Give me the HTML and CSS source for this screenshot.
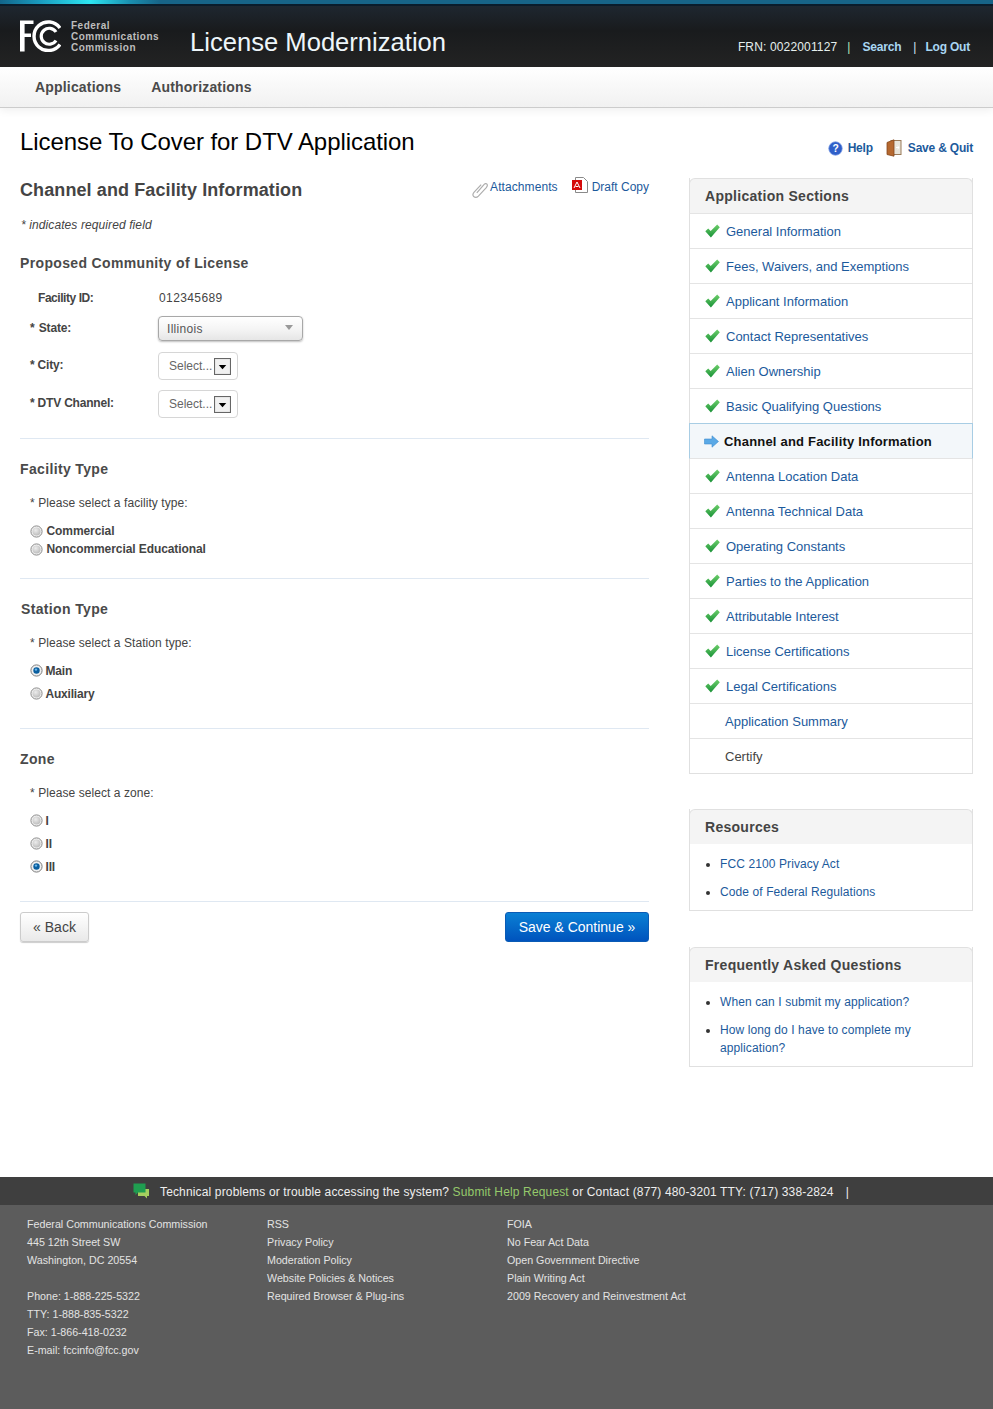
FILE: index.html
```html
<!DOCTYPE html>
<html lang="en">
<head>
<meta charset="utf-8">
<title>License Modernization</title>
<link rel="stylesheet" href="styles.css">
</head>
<body>
<svg class="defs" width="0" height="0" aria-hidden="true">
  <defs>
    <linearGradient id="chk" x1="0" y1="0" x2="0" y2="1"><stop offset="0" stop-color="#6fd06c"/><stop offset="1" stop-color="#169035"/></linearGradient>
    <radialGradient id="rdg" cx=".4" cy=".35" r=".8"><stop offset="0" stop-color="#ececec"/><stop offset="1" stop-color="#b4b4b4"/></radialGradient>
    <symbol id="check" viewBox="0 0 15 14"><path d="M0.3 7.3 L3.2 4.6 L5.7 7 L12.2 0.4 L14.8 3.2 L5.9 13.6 Z" fill="url(#chk)"/></symbol>
    <symbol id="radio" viewBox="0 0 13 13"><circle cx="6.5" cy="6.5" r="5.6" fill="#f2f2f2" stroke="#8a8a8a"/><circle cx="6.5" cy="6.5" r="4" fill="url(#rdg)"/></symbol>
    <symbol id="radio-on" viewBox="0 0 13 13"><circle cx="6.5" cy="6.5" r="5.6" fill="#f0f0f0" stroke="#7d7d7d"/><circle cx="6.5" cy="6.5" r="3.2" fill="#0a5f9f"/><circle cx="6" cy="5.6" r="1.2" fill="#6bb6ea"/></symbol>
    <symbol id="mini" viewBox="0 0 16 16"><rect x=".5" y=".5" width="15" height="15" fill="#f1f1f1" stroke="#666"/><path d="M4.5 6.5h7L8 10.5z" fill="#000"/></symbol>
  </defs>
</svg>

<div class="topband"></div>
<header class="masthead">
  <div class="brand">
    <svg class="logo" viewBox="0 0 41 32" aria-hidden="true">
      <path d="M0 0.5H13.5V4H4.6V13.5H11V17H4.6V31.5H0Z" fill="#fff"/>
      <path d="M40 8A14.3 14.3 0 1 0 40 24.5" fill="none" stroke="#fff" stroke-width="3.4"/>
      <path d="M36 12A8 8 0 1 0 36 20.5" fill="none" stroke="#fff" stroke-width="3.2"/>
    </svg>
    <div class="agency">Federal<br>Communications<br>Commission</div>
  </div>
  <div class="apptitle">License Modernization</div>
  <div class="userlinks">
    <span class="frn">FRN: 0022001127</span><span class="pipe green">|</span>
    <a class="ulink" href="#">Search</a><span class="pipe second">|</span>
    <a class="ulink" href="#">Log Out</a>
  </div>
</header>
<nav class="mainnav"><a href="#">Applications</a><a href="#">Authorizations</a></nav>

<div class="titlerow">
  <h1>License To Cover for DTV Application</h1>
  <div class="pagetools">
    <a href="#"><svg class="ic" viewBox="0 0 16 16" aria-hidden="true"><circle cx="8" cy="8" r="7.2" fill="#2f5fc9" stroke="#7f9fe6" stroke-width=".8"/><text x="8" y="12" text-anchor="middle" class="qm">?</text></svg>Help</a>
    <a href="#"><svg class="ic door" viewBox="0 0 16 18" aria-hidden="true"><rect x="5" y="1.5" width="10" height="14" fill="#e8e4da" stroke="#9a7a58"/><path d="M1 3.5L8 .8V17.2L1 15.5Z" fill="#b5682f" stroke="#85471c" stroke-width=".8"/><path d="M10 8.5h3M11.5 7l1.7 1.5-1.7 1.5" stroke="#fff" fill="none"/></svg>Save &amp; Quit</a>
  </div>
</div>

<div class="layout">
  <main class="content">
    <div class="sectionhead">
      <h2>Channel and Facility Information</h2>
      <div class="doclinks">
        <a href="#"><svg class="clip" viewBox="0 0 15 15" aria-hidden="true"><path d="M4.5 10.2L11 2.6C12 1.4 13.4 1.3 14 2C14.7 2.8 14.4 4 13.4 5.2L6 13.2C4.6 14.6 2.8 14.6 1.6 13.6C.6 12.6 .8 11 1.8 9.8L8.6 2.4" fill="none" stroke="#adadad" stroke-width="1.1"/></svg>Attachments</a>
        <a href="#"><svg class="pdf" viewBox="0 0 16 17" aria-hidden="true"><path d="M3.5 .5H11.5L15.5 4.5V15.5H3.5Z" fill="#fff" stroke="#8a8a8a"/><rect x="0" y="3" width="10" height="10" fill="#d40a0a"/><path d="M2 11L5 5L8 11M3.5 9.5H6.5" stroke="#fff" fill="none"/></svg>Draft Copy</a>
      </div>
    </div>
    <p class="required">* indicates required field</p>

    <section class="block first">
      <h3>Proposed Community of License</h3>
      <div class="field idfield"><span class="flabel indent">Facility ID:</span><span class="fvalue">012345689</span></div>
      <div class="field statefield"><span class="flabel">* State:</span><div class="dropdown"><span>Illinois</span><i class="caret"></i></div></div>
      <div class="field cityfield"><span class="flabel">* City:</span><div class="minisel"><span>Select...</span><svg class="mini"><use href="#mini"/></svg></div></div>
      <div class="field dtvfield"><span class="flabel">* DTV Channel:</span><div class="minisel"><span>Select...</span><svg class="mini"><use href="#mini"/></svg></div></div>
    </section>

    <section class="block facility">
      <h3>Facility Type</h3>
      <p class="prompt">* Please select a facility type:</p>
      <label class="opt tight first-opt"><svg class="rd"><use href="#radio"/></svg>Commercial</label>
      <label class="opt tight"><svg class="rd"><use href="#radio"/></svg>Noncommercial Educational</label>
    </section>

    <section class="block station">
      <h3 class="nudge">Station Type</h3>
      <p class="prompt">* Please select a Station type:</p>
      <label class="opt close first-opt"><svg class="rd"><use href="#radio-on"/></svg>Main</label>
      <label class="opt close"><svg class="rd"><use href="#radio"/></svg>Auxiliary</label>
    </section>

    <section class="block zone">
      <h3>Zone</h3>
      <p class="prompt">* Please select a zone:</p>
      <label class="opt close first-opt"><svg class="rd"><use href="#radio"/></svg>I</label>
      <label class="opt close"><svg class="rd"><use href="#radio"/></svg>II</label>
      <label class="opt close"><svg class="rd"><use href="#radio-on"/></svg>III</label>
    </section>

    <div class="actions">
      <a class="btn back" href="#">« Back</a>
      <a class="btn primary" href="#">Save &amp; Continue »</a>
    </div>
  </main>

  <aside class="sidebar">
    <div class="panel">
      <h4>Application Sections</h4>
      <ul class="steps">
        <li><svg class="ck"><use href="#check"/></svg><a href="#">General Information</a></li>
        <li><svg class="ck"><use href="#check"/></svg><a href="#">Fees, Waivers, and Exemptions</a></li>
        <li><svg class="ck"><use href="#check"/></svg><a href="#">Applicant Information</a></li>
        <li><svg class="ck"><use href="#check"/></svg><a href="#">Contact Representatives</a></li>
        <li><svg class="ck"><use href="#check"/></svg><a href="#">Alien Ownership</a></li>
        <li><svg class="ck"><use href="#check"/></svg><a href="#">Basic Qualifying Questions</a></li>
        <li class="current"><svg class="arrow" viewBox="0 0 15 13" aria-hidden="true"><path d="M0.5 4H8V0.8L14.5 6.5L8 12.2V9H0.5Z" fill="#5aa9e6" stroke="#3f8fd0" stroke-width=".6"/></svg><strong>Channel and Facility Information</strong></li>
        <li><svg class="ck"><use href="#check"/></svg><a href="#">Antenna Location Data</a></li>
        <li><svg class="ck"><use href="#check"/></svg><a href="#">Antenna Technical Data</a></li>
        <li><svg class="ck"><use href="#check"/></svg><a href="#">Operating Constants</a></li>
        <li><svg class="ck"><use href="#check"/></svg><a href="#">Parties to the Application</a></li>
        <li><svg class="ck"><use href="#check"/></svg><a href="#">Attributable Interest</a></li>
        <li><svg class="ck"><use href="#check"/></svg><a href="#">License Certifications</a></li>
        <li><svg class="ck"><use href="#check"/></svg><a href="#">Legal Certifications</a></li>
        <li class="plain"><a href="#">Application Summary</a></li>
        <li class="plain"><span>Certify</span></li>
      </ul>
    </div>
    <div class="panel">
      <h4 class="flat">Resources</h4>
      <ul class="links">
        <li><a href="#">FCC 2100 Privacy Act</a></li>
        <li><a href="#">Code of Federal Regulations</a></li>
      </ul>
    </div>
    <div class="panel">
      <h4 class="flat">Frequently Asked Questions</h4>
      <ul class="links">
        <li><a href="#">When can I submit my application?</a></li>
        <li><a href="#">How long do I have to complete my application?</a></li>
      </ul>
    </div>
  </aside>
</div>

<footer class="footer">
  <div class="helpbar">
    <svg class="chat" viewBox="0 0 17 16" aria-hidden="true"><path d="M5 6H16V13H14V15.5L11.5 13H5Z" fill="#a5cf5f"/><path d="M0.5 0.5H12.5V9.5H5L2.5 12V9.5H0.5Z" fill="#1f9e50"/></svg>
    <span>Technical problems or trouble accessing the system? <a href="#">Submit Help Request</a> or Contact (877) 480-3201 TTY: (717) 338-2824</span><span class="barpipe">|</span>
  </div>
  <div class="footcols">
    <div class="fcol">
      <p>Federal Communications Commission</p><p>445 12th Street SW</p><p>Washington, DC 20554</p>
      <p class="gap">Phone: 1-888-225-5322</p><p>TTY: 1-888-835-5322</p><p>Fax: 1-866-418-0232</p><p>E-mail: fccinfo@fcc.gov</p>
    </div>
    <div class="fcol">
      <p>RSS</p><p>Privacy Policy</p><p>Moderation Policy</p><p>Website Policies &amp; Notices</p><p>Required Browser &amp; Plug-ins</p>
    </div>
    <div class="fcol">
      <p>FOIA</p><p>No Fear Act Data</p><p>Open Government Directive</p><p>Plain Writing Act</p><p>2009 Recovery and Reinvestment Act</p>
    </div>
  </div>
</footer>
</body>
</html>
```
FILE: styles.css
```css
* { box-sizing: border-box; }
html, body { margin: 0; padding: 0; }
body { font-family: "Liberation Sans", Arial, sans-serif; color: #444; background: #fff; width: 993px; height: 1409px; overflow: hidden; display: flex; flex-direction: column; }
a { color: #1c5a9c; text-decoration: none; }
p, h1, h2, h3, h4, ul { margin: 0; padding: 0; }
.defs { position: absolute; }

.topband { height: 6px; flex: none; background: linear-gradient(90deg, #12658a 0, #1a9cc0 40px, #2de6f2 90px, #1a8fb0 130px, #176488 160px, #176488 100%); border-bottom: 2px solid #0a1c2b; }
.masthead { height: 61px; flex: none; background: linear-gradient(#1e2730 0, #191b1d 40%, #232323 100%); display: flex; position: relative; color: #fff; }
.brand { display: flex; margin: 14px 0 0 20px; width: 170px; }
.logo { width: 41px; height: 32px; }
.agency { margin: 0 0 0 10px; font-size: 10px; line-height: 11px; font-weight: bold; color: #bdbdbd; letter-spacing: .5px; white-space: nowrap; }
.apptitle { font-size: 25.6px; line-height: 30px; margin-top: 21px; color: #eef6fa; }
.userlinks { position: absolute; right: 23px; top: 34px; font-size: 12px; line-height: 14px; display: flex; }
.frn { color: #e6f0ee; letter-spacing: .15px; }
.ulink { color: #a9d6f2; font-weight: bold; letter-spacing: -.2px; }
.pipe { color: #cfe6f2; margin: 0 12px 0 10px; font-size: 12px; }
.pipe.second { margin: 0 9px 0 12px; }
.pipe.green { color: #b8e8c0; }

.mainnav { height: 41px; flex: none; background: linear-gradient(#fff, #f1f1f1); border-bottom: 1px solid #ccc; box-shadow: 0 3px 8px rgba(0,0,0,.06); padding-left: 35px; display: flex; gap: 30px; font-size: 14px; font-weight: bold; line-height: 40px; letter-spacing: .18px; }
.mainnav a { color: #4a4a4a; }

.titlerow { height: 70px; flex: none; padding: 19px 20px 0; display: flex; justify-content: space-between; }
h1 { font-size: 24px; line-height: 30px; font-weight: normal; color: #000; letter-spacing: -.07px; }
.pagetools { display: flex; gap: 13px; font-size: 12px; font-weight: bold; line-height: 14px; margin-top: 12px; letter-spacing: -.2px; }
.pagetools a { display: flex; align-items: center; height: 18px; color: #1c5a9c; }
.ic { width: 15px; height: 15px; margin-right: 5px; }
.ic.door { width: 16px; height: 18px; margin-right: 6px; }
.qm { font: bold 11px "Liberation Sans", sans-serif; fill: #fff; }

.layout { display: flex; padding: 0 20px; gap: 40px; flex: 1; }
.content { width: 629px; }
.sectionhead { display: flex; justify-content: space-between; height: 40px; padding-top: 1px; }
h2 { font-size: 18px; line-height: 22px; font-weight: bold; color: #444; letter-spacing: .1px; }
.doclinks { display: flex; gap: 14px; font-size: 12px; line-height: 14px; margin-top: 1px; }
.doclinks a { display: flex; align-items: flex-start; }
.clip { width: 16px; height: 16px; margin: 2px 2px 0 0; }
.pdf { width: 16px; height: 17px; margin: -3px 4px 0 0; }
.doclinks a:first-child { letter-spacing: .08px; }
.required { font-size: 12px; font-style: italic; line-height: 14px; margin-left: 1px; color: #444; letter-spacing: .1px; }

.block { border-bottom: 1px solid #dfe8f2; }
h3 { font-size: 14px; line-height: 18px; font-weight: bold; color: #4a4a4a; letter-spacing: .35px; }
.block.first { padding-top: 22px; height: 207px; }
.field { display: flex; align-items: flex-start; font-size: 12px; line-height: 14px; }
.flabel { width: 138px; padding-left: 10px; font-weight: bold; letter-spacing: -.2px; }
.flabel.indent { padding-left: 18px; letter-spacing: -.45px; }
.fvalue { letter-spacing: .4px; margin-left: 1px; }
.idfield { margin-top: 19px; }
.statefield { margin-top: 11px; }
.statefield .flabel { padding-top: 5px; word-spacing: 1.2px; }
.cityfield { margin-top: 11px; }
.dtvfield { margin-top: 10px; }
.cityfield .flabel, .dtvfield .flabel { padding-top: 6px; }
.dropdown { width: 145px; height: 25px; border: 1px solid #a8a8a8; border-radius: 4px; background: linear-gradient(#fff 0, #f4f4f4 55%, #e6e6e6 100%); box-shadow: 0 1px 2px rgba(0,0,0,.25); padding: 6px 8px; display: flex; justify-content: space-between; align-items: center; color: #555; letter-spacing: .3px; }
.caret { width: 0; height: 0; border: 4px solid transparent; border-top: 5px solid #999; border-bottom: 0; margin-right: 1px; margin-top: -3px; }
.minisel { width: 80px; height: 28px; border: 1px solid #d6d6d6; border-radius: 4px; padding: 0 6px 0 10px; display: flex; align-items: center; justify-content: space-between; color: #666; }
.mini { width: 17px; height: 17px; }

.facility { height: 140px; padding-top: 21px; }
.station { height: 150px; padding-top: 21px; }
.zone { height: 173px; padding-top: 21px; }
.nudge { margin-left: 1px; }
.prompt { font-size: 12px; line-height: 14px; margin: 18px 0 0 10px; color: #444; letter-spacing: .07px; }
.opt { display: flex; align-items: center; margin-left: 10px; font-size: 12px; font-weight: bold; color: #444; }
.rd { width: 13px; height: 13px; margin-right: 4px; flex: none; margin-left: -.5px; }
.tight { height: 18px; letter-spacing: -.08px; }
.close { height: 23px; letter-spacing: -.2px; }
.close .rd { margin-right: 3px; }
.first-opt { margin-top: 9px; }
.tight.first-opt { margin-top: 12px; }

.actions { display: flex; justify-content: space-between; margin-top: 10px; }
.btn { height: 30px; display: flex; align-items: center; justify-content: center; border-radius: 3px; font-size: 14px; }
.back { width: 69px; background: linear-gradient(#fff, #e9e9e9); border: 1px solid #ccc; box-shadow: 0 1px 1px rgba(0,0,0,.2); color: #444; }
.primary { width: 144px; background: linear-gradient(#0a80d4, #0053bd); border: 1px solid #0a5bb5; color: #fff; }

.sidebar { width: 284px; }
.panel { border: 1px solid #e0e0e0; border-top: 0; margin-bottom: 36px; position: relative; background: #fff; }
.panel:first-child { margin-bottom: 35px; }
h4 { font-size: 14px; line-height: 34px; font-weight: bold; letter-spacing: .28px; color: #444; background: #f4f4f4; padding-left: 15px; border-top: 1px solid #e0e0e0; border-bottom: 1px solid #e4e4e4; border-radius: 6px 6px 0 0; margin: 0 -1px; border-left: 1px solid #e0e0e0; border-right: 1px solid #e0e0e0; height: 36px; }
h4.flat { border-bottom: 0; height: 35px; }
.steps { list-style: none; }
.steps li { height: 35px; display: flex; align-items: center; font-size: 13px; padding-left: 15px; border-bottom: 1px solid #e4e4e4; }
.steps li:last-child { border-bottom: 0; height: 34px; }
.steps li.plain { padding-left: 35px; }
.plain span { color: #444; }
.ck { width: 15px; height: 14px; margin-right: 6px; flex: none; }
.current { background: #f3f7fa; border: 1px solid #a8cde4; margin: -1px -1px 0; height: 36px !important; padding-left: 14px !important; }
.current strong { color: #111; font-size: 13px; letter-spacing: .2px; }
.arrow { width: 15px; height: 13px; margin-right: 5px; flex: none; }
.links { list-style: disc; padding: 11px 30px 9px; font-size: 12px; line-height: 18px; letter-spacing: .1px; }
.links li { margin-bottom: 10px; }
.links li:last-child { margin-bottom: 0; }
.links li::marker { color: #333; }

.footer { height: 232px; flex: none; background: #5c5c5c; color: #e3e3e3; font-size: 10.7px; }
.helpbar { height: 28px; background: #3f3f3f; display: flex; align-items: center; padding: 1px 0 0 133px; font-size: 12px; color: #eee; letter-spacing: .15px; }
.helpbar a { color: #95c96b; }
.chat { width: 17px; height: 16px; margin-right: 10px; margin-top: -1px; }
.barpipe { margin-left: 12px; }
.footcols { display: flex; padding: 10px 0 0 27px; }
.fcol { width: 240px; }
.fcol p { line-height: 18px; white-space: nowrap; }
.fcol p.gap { margin-top: 18px; }
```
